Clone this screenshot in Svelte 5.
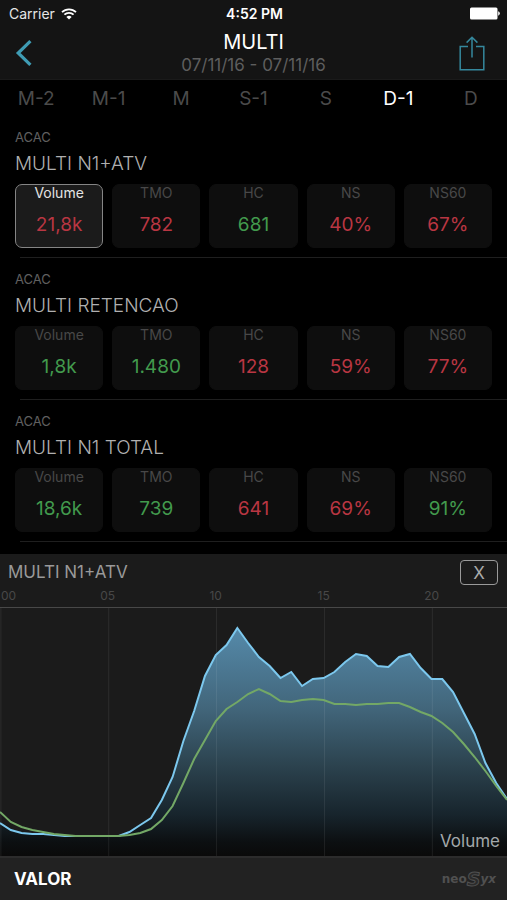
<script>
  const periods = ['M-2', 'M-1', 'M', 'S-1', 'S', 'D-1', 'D'];
  let period = $state('D-1');
  let selected = $state('0-0');
  let chartOpen = $state(true);

  const labels = ['Volume', 'TMO', 'HC', 'NS', 'NS60'];
  const groups = [
    { tag: 'ACAC', name: 'MULTI N1+ATV', values: ['21,8k', '782', '681', '40%', '67%'], good: [2] },
    { tag: 'ACAC', name: 'MULTI RETENCAO', values: ['1,8k', '1.480', '128', '59%', '77%'], good: [0, 1] },
    { tag: 'ACAC', name: 'MULTI N1 TOTAL', values: ['18,6k', '739', '641', '69%', '91%'], good: [0, 1, 4] }
  ];

  const hours = ['00', '05', '10', '15', '20'];

  // Half-hourly samples, measured down from the top of the plot.
  const today = [
    215, 222, 225, 226, 226, 227, 228, 228, 228, 228, 228, 228, 224, 217, 210, 192,
    169, 133, 103, 68, 47, 37, 20, 35, 49, 58, 70, 64, 78, 71, 70, 64,
    54, 46, 48, 58, 59, 49, 46, 60, 71, 71, 84, 105, 126, 155, 175, 191
  ];
  const expected = [
    204, 214, 219, 222, 224, 226, 227, 228, 228, 228, 228, 228, 227, 225, 221, 212,
    198, 175, 151, 132, 113, 101, 94, 86, 81, 86, 93, 94, 92, 91, 92, 96,
    96, 97, 96, 96, 95, 95, 99, 104, 108, 115, 124, 136, 149, 163, 178, 192
  ];
  const toPoints = (series) => series.map((y, i) => `${i},${y}`).join(' ');
</script>

<div class="app">
  <header>
    <div class="status">
      <span class="carrier">
        Carrier
        <svg width="16" height="12" viewBox="0 0 16 12" aria-hidden="true">
          <path d="M1 4.2a10 10 0 0 1 14 0M3.4 6.7a6.6 6.6 0 0 1 9.2 0" fill="none" stroke="#fff" stroke-width="1.8" />
          <path d="M8 11.6 5.4 8.9a3.8 3.8 0 0 1 5.2 0Z" fill="#fff" />
        </svg>
      </span>
      <span class="clock">4:52 PM</span>
      <svg class="battery" width="30" height="13" viewBox="0 0 30 13" role="img" aria-label="Battery full">
        <rect x="0" y="0.5" width="27.5" height="12" rx="1.5" fill="#fff" />
        <path d="M28.2 4.3q1.6.6 1.6 2.2t-1.6 2.2Z" fill="#fff" />
      </svg>
    </div>
    <div class="nav">
      <button class="back" aria-label="Back">
        <svg width="18" height="28" viewBox="0 0 18 28" aria-hidden="true">
          <path d="M15.4 2.2 3.2 14l12.2 11.8" fill="none" stroke="#3f9cb4" stroke-width="3.2" />
        </svg>
      </button>
      <div class="heading">
        <h1>MULTI</h1>
        <p>07/11/16 - 07/11/16</p>
      </div>
      <button class="share" aria-label="Share">
        <svg width="26" height="36" viewBox="0 0 26 36" aria-hidden="true">
          <path d="M9 11.5H1.2V34.7H24.8V11.5H17M13 22.5V2.2M7.6 7.6 13 2.2l5.4 5.4" fill="none" stroke="#35889d" stroke-width="1.5" />
        </svg>
      </button>
    </div>
  </header>

  <nav class="periods">
    {#each periods as p}
      <button class:active={p === period} onclick={() => (period = p)}>{p}</button>
    {/each}
  </nav>

  <main>
    {#each groups as group, g}
      <section class="group">
        <p class="tag">{group.tag}</p>
        <h2>{group.name}</h2>
        <div class="cards">
          {#each group.values as value, i}
            <button
              class="card"
              class:selected={selected === `${g}-${i}`}
              onclick={() => (selected = `${g}-${i}`)}
            >
              <span class="label">{labels[i]}</span>
              <span class="value" class:good={group.good.includes(i)}>{value}</span>
            </button>
          {/each}
        </div>
      </section>
    {/each}
  </main>

  {#if chartOpen}
    <section class="chart">
      <div class="chart-head">
        <h3>MULTI N1+ATV</h3>
        <button onclick={() => (chartOpen = false)}>X</button>
      </div>
      <div class="axis">
        {#each hours as hour}
          <span>{hour}</span>
        {/each}
      </div>
      <div class="plot">
        <svg viewBox="0 0 47 248" preserveAspectRatio="none" role="img" aria-label="Volume by hour">
          <defs>
            <linearGradient id="fill" gradientUnits="userSpaceOnUse" x1="0" y1="20" x2="0" y2="248">
              <stop offset="0" stop-color="#558aaa" />
              <stop offset="0.35" stop-color="#42667b" />
              <stop offset="0.6" stop-color="#2c434f" />
              <stop offset="0.82" stop-color="#17242c" />
              <stop offset="0.94" stop-color="#0c0f11" />
              <stop offset="1" stop-color="#0a0a0a" />
            </linearGradient>
          </defs>
          <polygon points={`0,248 ${toPoints(today)} 47,248`} fill="url(#fill)" />
          {#each hours as _, i}
            <line x1={i * 10 + 0.08} x2={i * 10 + 0.08} y1="0" y2="248" class="rule" />
          {/each}
          <polyline points={toPoints(today)} class="today" />
          <polyline points={toPoints(expected)} class="expected" />
        </svg>
        <span class="metric">Volume</span>
      </div>
    </section>
  {/if}

  <footer>
    <strong>VALOR</strong>
    <span class="brand">neo<i class="s">S</i><i>yx</i></span>
  </footer>
</div>

<style>
  :global(body) {
    margin: 0;
    background: #000;
  }
  .app {
    display: flex;
    flex-direction: column;
    min-height: 100vh;
    background: #000;
    color: #fff;
    font-family: Inter, 'Liberation Sans', sans-serif;
  }
  h1, h2, h3, p {
    margin: 0;
    font-weight: 400;
  }
  button {
    margin: 0;
    padding: 0;
    border: 0;
    background: none;
    color: inherit;
    font: inherit;
    cursor: pointer;
  }
  svg {
    display: block;
  }

  header {
    background: #141414;
    border-bottom: 1px solid #1a1a1a;
  }
  .status {
    display: grid;
    grid-template-columns: 1fr auto 1fr;
    align-items: center;
    height: 27px;
    padding: 0 7px 0 9px;
    font-size: 14px;
  }
  .carrier {
    display: flex;
    align-items: center;
    gap: 6px;
    color: #e6e6e6;
  }
  .clock {
    font-weight: 600;
  }
  .battery {
    justify-self: end;
  }
  .nav {
    display: grid;
    grid-template-columns: 48px 1fr 48px;
    align-items: center;
    height: 52px;
  }
  .back {
    justify-self: start;
    padding-left: 15px;
  }
  .share {
    justify-self: start;
  }
  .heading {
    text-align: center;
  }
  h1 {
    font-size: 20px;
    line-height: 24px;
  }
  .heading p {
    color: #5e5e5e;
    font-size: 17px;
    line-height: 22px;
  }

  .periods {
    display: grid;
    grid-template-columns: repeat(7, 1fr);
    height: 36px;
    color: #4b4b4b;
    font-size: 19px;
  }
  .periods .active {
    color: #fff;
  }

  main {
    flex: 1;
    padding-top: 10px;
  }
  .group {
    height: 142px;
    padding: 0 15px;
    box-sizing: border-box;
    background: linear-gradient(#1f1f1f, #1f1f1f) 20px 131px / 100% 1px no-repeat;
  }
  .tag {
    padding-top: 3px;
    color: #606060;
    font-size: 13px;
    line-height: 16px;
  }
  h2 {
    padding: 5px 0 6px;
    color: #b0b0b0;
    font-size: 19px;
    font-weight: 300;
    line-height: 28px;
  }
  .cards {
    display: grid;
    grid-template-columns: repeat(5, 1fr);
    gap: 9px;
  }
  .card {
    display: flex;
    flex-direction: column;
    align-items: center;
    height: 64px;
    border: 1px solid #0e0e0e;
    border-radius: 7px;
    background: #0e0e0e;
  }
  .label {
    color: #484848;
    font-size: 14px;
    line-height: 16px;
  }
  .value {
    padding-top: 11px;
    color: #b93642;
    font-size: 19px;
    line-height: 26px;
  }
  .value.good {
    color: #429a4d;
  }
  .card.selected {
    border-color: #858585;
    background: #1b1b1b;
  }
  .selected .label {
    color: #e4e4e4;
  }

  .chart {
    background: #1b1b1b;
  }
  .chart-head {
    display: flex;
    align-items: center;
    justify-content: space-between;
    height: 35px;
    padding: 0 9px 0 8px;
  }
  h3 {
    color: #999;
    font-size: 17px;
  }
  .chart-head button {
    width: 38px;
    height: 25px;
    margin-top: 2px;
    border: 1px solid #9a9a9a;
    border-radius: 4px;
    color: #aaa;
    font-size: 17px;
    line-height: 22px;
  }
  .axis {
    display: grid;
    grid-template-columns: 10.6% repeat(4, 21.3%);
    height: 18px;
    border-bottom: 1px solid #484848;
    color: #484848;
    font-size: 12px;
    line-height: 14px;
    text-align: center;
  }
  .axis span:first-child {
    padding-left: 1px;
    text-align: left;
  }
  .plot {
    position: relative;
  }
  .plot svg {
    width: 100%;
    height: 248px;
  }
  .plot polyline,
  .rule {
    fill: none;
    vector-effect: non-scaling-stroke;
  }
  .today {
    stroke: #7cc8ee;
    stroke-width: 2px;
  }
  .expected {
    stroke: #73a866;
    stroke-width: 2px;
  }
  .rule {
    stroke: #fff;
    stroke-opacity: 0.08;
    stroke-width: 1px;
  }
  .metric {
    position: absolute;
    right: 7px;
    bottom: 4px;
    color: #a3a8aa;
    font-size: 17px;
    line-height: 22px;
  }

  footer {
    display: flex;
    align-items: center;
    justify-content: space-between;
    height: 44px;
    box-sizing: border-box;
    padding: 0 11px 0 14px;
    border-top: 2px solid #2c2c2c;
    background: #222;
  }
  strong {
    font-size: 17px;
    font-weight: 700;
  }
  .brand {
    display: flex;
    align-items: center;
    color: #505050;
    font: 700 12px/16px 'DejaVu Sans', sans-serif;
  }
  .brand .s {
    color: #2b2b2b;
    font-size: 19px;
    -webkit-text-stroke: 1px #505050;
  }
</style>
